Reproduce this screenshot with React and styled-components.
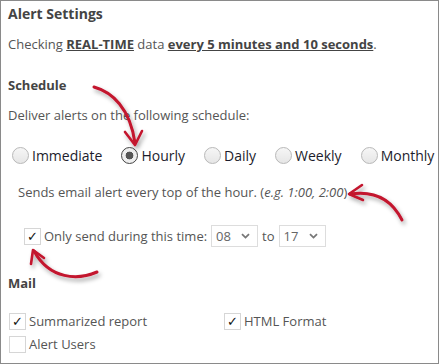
import React from 'react';
import styled, { createGlobalStyle } from 'styled-components';

const GlobalStyle = createGlobalStyle`
  html, body {
    margin: 0;
    padding: 0;
    background: #fff;
  }
  body {
    font-family: 'Open Sans', 'Liberation Sans', sans-serif;
    font-size: 13px;
    color: #555;
  }
`;

const scheduleOptions = ['Immediate', 'Hourly', 'Daily', 'Weekly', 'Monthly'];

function Radio({ label, checked }) {
  return (
    <RadioLabel>
      <RadioCircle checked={checked} />
      <RadioText>{label}</RadioText>
    </RadioLabel>
  );
}

function Check({ label, checked }) {
  return (
    <CheckLabel>
      <CheckBox>{checked ? '✓' : ''}</CheckBox>
      {label && <span>{label}</span>}
    </CheckLabel>
  );
}

function Select({ value }) {
  return (
    <SelectBox>
      <span>{value}</span>
      <svg width="9" height="6" viewBox="0 0 9 6">
        <path d="M1 1.2 L4.5 4.6 L8 1.2" fill="none" stroke="#777" strokeWidth="1.8" />
      </svg>
    </SelectBox>
  );
}

function Arrows() {
  return (
    <Overlay width="443" height="364" viewBox="0 0 443 364">
      <defs>
        <filter id="shadow" x="-30%" y="-30%" width="160%" height="160%">
          <feDropShadow dx="2" dy="3" stdDeviation="2" floodColor="#000" floodOpacity="0.35" />
        </filter>
      </defs>
      <g fill="none" stroke="#c3142d" strokeLinecap="round" strokeLinejoin="round" filter="url(#shadow)">
        <path d="M94 87 C112 92 130 108 135 143" strokeWidth="3" />
        <path d="M125 132 L135 145 L142 131" strokeWidth="2.6" />

        <path d="M402 220 C392 200 376 190 350 194" strokeWidth="3" />
        <path d="M362 185 L349 194 L363 200" strokeWidth="2.6" />

        <path d="M97 272 C78 280 50 280 34 251" strokeWidth="3" />
        <path d="M31 264 L33 250 L44 258" strokeWidth="2.6" />
      </g>
    </Overlay>
  );
}

export default function App() {
  return (
    <>
      <GlobalStyle />
      <Card>
        <Title>Alert Settings</Title>
        <Paragraph>
          Checking <Strong>REAL-TIME</Strong> data <Strong>every 5 minutes and 10 seconds</Strong>.
        </Paragraph>

        <SectionTitle>Schedule</SectionTitle>
        <Paragraph>Deliver alerts on the following schedule:</Paragraph>
        <RadioRow>
          {scheduleOptions.map(opt => (
            <Radio key={opt} label={opt} checked={opt === 'Hourly'} />
          ))}
        </RadioRow>
        <Note>
          Sends email alert every top of the hour. (<em>e.g. 1:00, 2:00</em>)
        </Note>
        <TimeRow>
          <Check label="Only send during this time:" checked />
          <Select value="08" />
          <span>to</span>
          <Select value="17" />
        </TimeRow>

        <MailTitle>Mail</MailTitle>
        <MailGrid>
          <Check label="Summarized report" checked />
          <Check label="HTML Format" checked />
          <Check label="Alert Users" />
        </MailGrid>
        <Arrows />
      </Card>
    </>
  );
}

const Card = styled.div`
  position: relative;
  box-sizing: border-box;
  width: 439px;
  height: 364px;
  border: 1px solid #8a8a8a;
  padding: 3px 0 0 7px;
`;

const Title = styled.div`
  font-size: 14px;
  font-weight: 700;
  color: #444;
  line-height: 20px;
`;

const Paragraph = styled.div`
  line-height: 20px;
  margin-top: 10px;
`;

const Strong = styled.span`
  font-weight: 700;
  color: #444;
  text-decoration: underline;
`;

const SectionTitle = styled.div`
  font-weight: 700;
  color: #444;
  line-height: 20px;
  margin-top: 21px;
`;

const RadioRow = styled.div`
  display: flex;
  align-items: center;
  gap: 19px;
  margin-top: 19px;
  padding-left: 4px;
  height: 22px;
`;

const RadioLabel = styled.label`
  display: flex;
  align-items: center;
  gap: 3px;
`;

const RadioCircle = styled.span`
  box-sizing: border-box;
  width: 17px;
  height: 17px;
  border-radius: 50%;
  border: 1px solid ${p => (p.checked ? '#444' : '#b8b8b8')};
  background: ${p =>
    p.checked
      ? 'radial-gradient(circle, #555 0 3.6px, #eee 4.2px)'
      : 'linear-gradient(#f6f6f6, #e6e6e6)'};
`;

const RadioText = styled.span`
  color: #1c1c2c;
  font-size: 14px;
`;

const Note = styled.div`
  margin-top: 16px;
  padding-left: 10px;
  line-height: 20px;
`;

const TimeRow = styled.div`
  display: flex;
  align-items: center;
  gap: 4px;
  margin-top: 23px;
  padding-left: 16px;
  height: 22px;
`;

const CheckLabel = styled.label`
  display: flex;
  align-items: center;
  gap: 3px;
`;

const CheckBox = styled.span`
  box-sizing: border-box;
  width: 17px;
  height: 17px;
  border: 1px solid #d6d6d6;
  background: #fff;
  color: #111;
  font-family: 'DejaVu Sans', sans-serif;
  font-size: 13px;
  line-height: 15px;
  text-align: center;
`;

const SelectBox = styled.div`
  box-sizing: border-box;
  width: 47px;
  height: 22px;
  border: 1px solid #ddd;
  display: flex;
  align-items: center;
  justify-content: space-between;
  padding: 0 7px 0 4px;
  color: #666;
`;

const MailTitle = styled(SectionTitle)`
  margin-top: 26px;
`;

const MailGrid = styled.div`
  display: grid;
  grid-template-columns: 215px auto;
  row-gap: 5px;
  margin-top: 19px;
  padding-left: 1px;
`;

const Overlay = styled.svg`
  position: absolute;
  left: -1px;
  top: -1px;
  pointer-events: none;
`;
